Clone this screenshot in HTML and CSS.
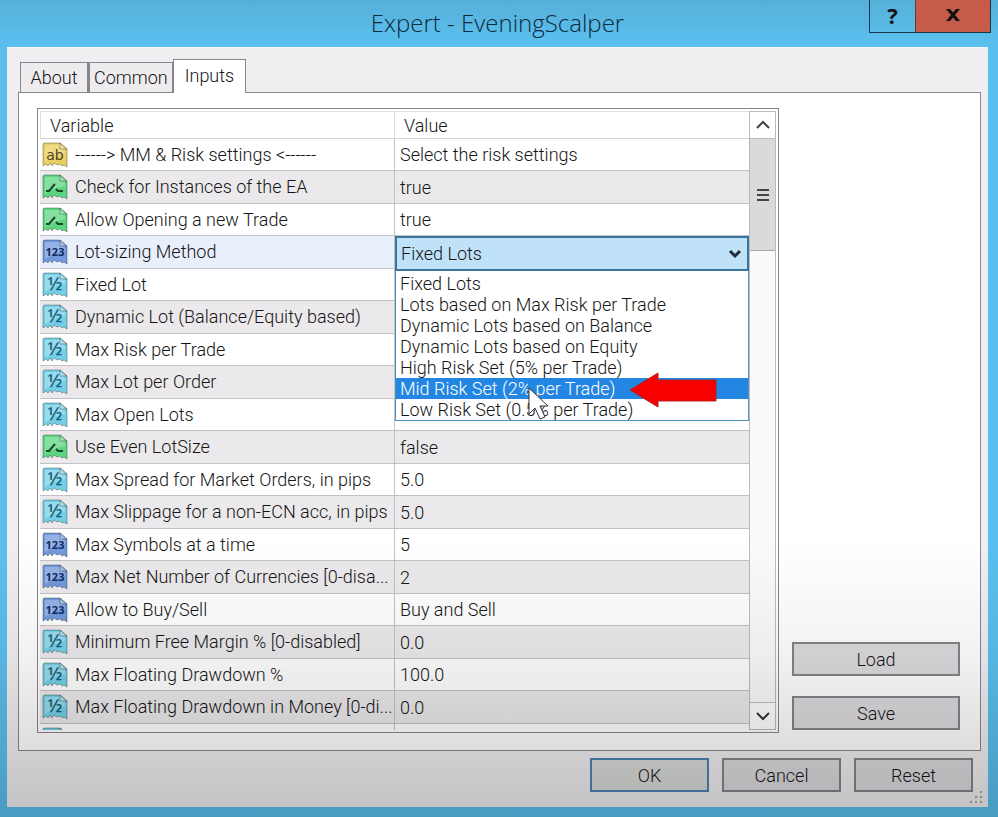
FILE: index.html
```html
<!DOCTYPE html>
<html lang="en">
<head>
    <meta charset="UTF-8">
    <meta name="viewport" content="width=device-width, initial-scale=1.0">
    <title>Expert - EveningScalper</title>
    <link rel="stylesheet" href="styles.css">
</head>
<body>
    <!-- Shapes shared by the type icons -->
    <svg class="sprite" aria-hidden="true">
        <symbol id="sheet" viewBox="0 0 26 26">
            <path d="M1 2 L2 1 H18 L25 7 V25 L22 23 L20 24 L18 22 L15 23 L12 21 L10 24 L8 21 L6 24 L4 22 L1 24 Z" fill="currentColor" stroke="#000" stroke-opacity=".3"/>
            <path d="M3 3 H17 L23 9 V12 Q12 14 3 20 Z" fill="#fff" fill-opacity=".25"/>
            <path d="M18 1 V7 H25 Z" fill="#fff" fill-opacity=".35" stroke="#000" stroke-opacity=".3"/>
        </symbol>
        <symbol id="sheet-bool" viewBox="0 0 26 26">
            <use href="#sheet"/>
            <path d="M4 17 H7 L13 10 M14 15 L16 17 H21" fill="none" stroke="#17482a" stroke-width="2"/>
        </symbol>
    </svg>

    <div class="window">
        <header class="titlebar">
            <h1>Expert - EveningScalper</h1>
            <div class="window-buttons">
                <button class="help" type="button">?</button>
                <button class="close" type="button" aria-label="Close">
                    <svg width="16" height="14" viewBox="0 0 16 14"><path d="M1 1 H5 L8 4.500 L11 1 H15 L10 7 L15 13 H11 L8 9.500 L5 13 H1 L6 7 Z" fill="#111"/></svg>
                </button>
            </div>
        </header>

        <main class="dialog">
            <nav class="tabs">
                <button type="button" class="tab">About</button>
                <button type="button" class="tab">Common</button>
                <button type="button" class="tab active">Inputs</button>
            </nav>

            <section class="panel">
                <div class="list">
                    <div class="table-wrap">
                        <table>
                            <thead>
                                <tr><th class="name-col">Variable</th><th>Value</th></tr>
                            </thead>
                            <tbody>
                                <tr><td><span class="icon yellow"><svg><use href="#sheet"/></svg><b>ab</b></span>------&gt; MM &amp; Risk settings &lt;------</td><td>Select the risk settings</td></tr>
                                <tr><td><span class="icon green"><svg><use href="#sheet-bool"/></svg></span>Check for Instances of the EA</td><td>true</td></tr>
                                <tr><td><span class="icon green"><svg><use href="#sheet-bool"/></svg></span>Allow Opening a new Trade</td><td>true</td></tr>
                                <tr class="selected">
                                    <td><span class="icon blue"><svg><use href="#sheet"/></svg><b>123</b></span><label for="lot-method">Lot-sizing Method</label></td>
                                    <td class="editor">
                                        <div class="combo">
                                            <select id="lot-method">
                                                <option>Fixed Lots</option>
                                            </select>
                                            <svg class="combo-arrow" width="14" height="10" viewBox="0 0 14 10"><path d="M2 2 L7 7 L12 2" fill="none" stroke="#222c36" stroke-width="3"/></svg>
                                            <ul class="options">
                                                <li>Fixed Lots</li>
                                                <li>Lots based on Max Risk per Trade</li>
                                                <li>Dynamic Lots based on Balance</li>
                                                <li>Dynamic Lots based on Equity</li>
                                                <li>High Risk Set (5% per Trade)</li>
                                                <li class="current">Mid Risk Set (2% per Trade)</li>
                                                <li>Low Risk Set (0.5% per Trade)</li>
                                            </ul>
                                            <svg class="red-arrow" width="90" height="38" viewBox="0 0 90 38"><path d="M1 18 L29 1 V8 H87 V29 H29 V35 Z" fill="#f90000" stroke="#b3201c"/></svg>
                                            <svg class="cursor" width="22" height="34" viewBox="0 0 22 34"><path d="M1 1 V27 L7 21 L12 32 L17 30 L12 19 H20 Z" fill="#fff" stroke="#333"/></svg>
                                        </div>
                                    </td>
                                </tr>
                                <tr><td><span class="icon cyan"><svg><use href="#sheet"/></svg><b>½</b></span>Fixed Lot</td><td></td></tr>
                                <tr><td><span class="icon cyan"><svg><use href="#sheet"/></svg><b>½</b></span>Dynamic Lot (Balance/Equity based)</td><td></td></tr>
                                <tr><td><span class="icon cyan"><svg><use href="#sheet"/></svg><b>½</b></span>Max Risk per Trade</td><td></td></tr>
                                <tr><td><span class="icon cyan"><svg><use href="#sheet"/></svg><b>½</b></span>Max Lot per Order</td><td></td></tr>
                                <tr><td><span class="icon cyan"><svg><use href="#sheet"/></svg><b>½</b></span>Max Open Lots</td><td></td></tr>
                                <tr><td><span class="icon green"><svg><use href="#sheet-bool"/></svg></span>Use Even LotSize</td><td>false</td></tr>
                                <tr><td><span class="icon cyan"><svg><use href="#sheet"/></svg><b>½</b></span>Max Spread for Market Orders, in pips</td><td>5.0</td></tr>
                                <tr><td><span class="icon cyan"><svg><use href="#sheet"/></svg><b>½</b></span>Max Slippage for a non-ECN acc, in pips</td><td>5.0</td></tr>
                                <tr><td><span class="icon blue"><svg><use href="#sheet"/></svg><b>123</b></span>Max Symbols at a time</td><td>5</td></tr>
                                <tr><td><span class="icon blue"><svg><use href="#sheet"/></svg><b>123</b></span>Max Net Number of Currencies [0-disa...</td><td>2</td></tr>
                                <tr><td><span class="icon blue"><svg><use href="#sheet"/></svg><b>123</b></span>Allow to Buy/Sell</td><td>Buy and Sell</td></tr>
                                <tr><td><span class="icon cyan"><svg><use href="#sheet"/></svg><b>½</b></span>Minimum Free Margin % [0-disabled]</td><td>0.0</td></tr>
                                <tr><td><span class="icon cyan"><svg><use href="#sheet"/></svg><b>½</b></span>Max Floating Drawdown %</td><td>100.0</td></tr>
                                <tr><td><span class="icon cyan"><svg><use href="#sheet"/></svg><b>½</b></span>Max Floating Drawdown in Money [0-di...</td><td>0.0</td></tr>
                                <tr><td><span class="icon cyan"><svg><use href="#sheet"/></svg></span></td><td></td></tr>
                            </tbody>
                        </table>
                    </div>
                    <div class="scrollbar">
                        <button type="button" class="scroll-btn" aria-label="Scroll up">
                            <svg width="14" height="10" viewBox="0 0 14 10"><path d="M1 8 L7 2 L13 8" fill="none" stroke="#444" stroke-width="2"/></svg>
                        </button>
                        <div class="thumb">
                            <svg width="12" height="14" viewBox="0 0 12 14"><path d="M0 2 H12 M0 7 H12 M0 12 H12" stroke="#444" stroke-width="2"/></svg>
                        </div>
                        <button type="button" class="scroll-btn down" aria-label="Scroll down">
                            <svg width="14" height="10" viewBox="0 0 14 10"><path d="M1 2 L7 8 L13 2" fill="none" stroke="#333" stroke-width="2"/></svg>
                        </button>
                    </div>
                </div>

                <div class="side-buttons">
                    <button type="button" class="btn">Load</button>
                    <button type="button" class="btn">Save</button>
                </div>
            </section>

            <footer class="actions">
                <button type="button" class="btn default">OK</button>
                <button type="button" class="btn">Cancel</button>
                <button type="button" class="btn">Reset</button>
            </footer>
            <svg class="grip" width="14" height="14" viewBox="0 0 14 14"><path d="M10 0h2v2h-2z M10 5h2v2h-2z M5 5h2v2h-2z M10 10h2v2h-2z M5 10h2v2h-2z M0 10h2v2h-2z" fill="#a5a2a8"/></svg>
        </main>
    </div>
</body>
</html>
```

FILE: styles.css
```css
* {
    margin: 0;
    padding: 0;
    box-sizing: border-box;
}

body {
    font-family: Roboto, "Liberation Sans", sans-serif;
    font-size: 18px;
    font-weight: 300;
    line-height: 21px;
    color: #151515;
}

button, select {
    font: inherit;
    color: inherit;
    border-radius: 0;
}

.sprite {
    position: absolute;
    width: 0;
    height: 0;
}

/* Window frame */
.window {
    position: relative;
    min-height: 100vh;
    padding: 0 10px 10px 7px;
    display: flex;
    flex-direction: column;
    background: linear-gradient(#56afd8, #5bbfed 40px);
}

/* Shade that falls over the lower part of the window */
.window::after {
    content: "";
    position: absolute;
    inset: 0;
    background: linear-gradient(transparent 66%, rgba(0, 0, 0, 0.05) 80%, rgba(0, 0, 0, 0.19));
    pointer-events: none;
}

.titlebar {
    position: relative;
    height: 47px;
    padding-bottom: 2px;
    display: flex;
    align-items: center;
    justify-content: center;
}

.titlebar h1 {
    font-family: "Open Sans", "Noto Sans", sans-serif;
    font-size: 24px;
    font-weight: 300;
    line-height: 30px;
    color: #0c2a3c;
}

.window-buttons {
    position: absolute;
    top: 0;
    right: -3px;
    display: flex;
    height: 33px;
    border: 1px solid #16384c;
    border-top: 0;
}

.window-buttons button {
    padding-bottom: 2px;
    border: 0;
    display: flex;
    align-items: center;
    justify-content: center;
}

.help {
    width: 45px;
    font-family: "Open Sans", sans-serif;
    font-size: 22px;
    font-weight: 700;
    color: #111;
    background: transparent;
}

.window-buttons .close {
    width: 75px;
    background: #c75b49;
    border-left: 1px solid #5c3b3b;
}

/* Dialog */
.dialog {
    position: relative;
    flex: 1;
    padding: 11px 6px 15px 11px;
    display: flex;
    flex-direction: column;
    background: #f0eef0;
    border-top: 1px solid #f8f6fa;
    border-right: 1px solid #d8f2fc;
}

.tabs {
    display: flex;
    align-items: flex-end;
    padding-left: 2px;
    height: 33px;
}

.tab {
    min-width: 68px;
    height: 30px;
    padding: 0 4px;
    background: #eeecef;
    border: 1px solid #88868c;
    border-bottom: 0;
}

.tab + .tab {
    border-left-width: 2px;
}

.tab.active {
    position: relative;
    z-index: 1;
    height: 34px;
    margin-bottom: -1px;
    padding: 0 11px 2px;
    background: #fff;
    border-left-width: 1px;
}

.panel {
    flex: 1;
    display: flex;
    gap: 13px;
    padding: 15px 20px 17px 18px;
    background: #fff;
    border: 1px solid #88868c;
}

.list {
    flex: 1;
    height: 625px;
    display: flex;
    padding: 2px;
    border: 1px solid #88868c;
}

.table-wrap {
    flex: 1;
    overflow: hidden;
}

table {
    width: 100%;
    table-layout: fixed;
    border-collapse: separate;
    border-spacing: 0;
}

th {
    height: 28px;
    padding-left: 9px;
    text-align: left;
    font-weight: 300;
    border-top: 1px solid #dedede;
    border-bottom: 1px solid #d5d3d5;
    border-left: 1px solid #dedede;
}

.name-col {
    width: 354px;
}

tbody tr {
    height: 32px;
}

tbody tr:nth-child(even) {
    height: 33px;
    background: #ebe9eb;
}

tbody tr.selected {
    background: #e9f0fc;
}

td {
    padding: 0 0 0 2px;
    border-bottom: 1px solid #c3c1c4;
    white-space: nowrap;
}

td + td {
    padding-left: 5px;
    border-left: 1px solid #c3c1c4;
}

/* Type icon: a torn sheet with its sign on top */
.icon {
    position: relative;
    display: inline-block;
    width: 26px;
    height: 26px;
    margin-right: 7px;
    vertical-align: -7px;
}

.icon svg {
    display: block;
    width: 26px;
    height: 26px;
}

.icon b {
    position: absolute;
    inset: 0;
    text-align: center;
    font-family: "Open Sans", sans-serif;
    font-size: 11px;
    font-weight: 700;
    line-height: 26px;
}

.yellow { color: #e7cf62; }
.green { color: #5cd581; }
.blue { color: #7199dc; }
.cyan { color: #74cfe6; }

.yellow b {
    font-family: "DejaVu Sans", sans-serif;
    font-size: 14px;
    font-weight: 400;
    color: #51431a;
}

.blue b {
    color: #102d62;
}

.cyan b {
    font-size: 18px;
    font-weight: 600;
    line-height: 22px;
    color: #17607b;
}

/* Open drop-down over the value cell */
.editor {
    position: relative;
}

.combo {
    position: absolute;
    top: 0;
    left: 0;
    right: 0;
    z-index: 2;
}

.combo select {
    display: block;
    width: 100%;
    height: 35px;
    padding-left: 4px;
    appearance: none;
    background: #bfe2f9;
    border: 2px solid #37759c;
}

.combo-arrow {
    position: absolute;
    top: 13px;
    right: 7px;
}

.options {
    list-style: none;
    padding: 2px 0 0;
    background: #fff;
    border: 1px solid #4a91bd;
    border-top: 0;
}

.options li {
    height: 21px;
    padding-left: 4px;
}

.options .current {
    color: #fff;
    background: #2386e2;
}

.red-arrow {
    position: absolute;
    top: 136px;
    left: 234px;
}

.cursor {
    position: absolute;
    top: 151px;
    left: 133px;
}

/* Scrollbar */
.scrollbar {
    width: 27px;
    display: flex;
    flex-direction: column;
    background: #fbfafb;
    border: 1px solid #bcbabd;
}

.scroll-btn {
    height: 27px;
    display: flex;
    align-items: center;
    justify-content: center;
    background: #fff;
    border: 0;
    border-bottom: 1px solid #bcbabd;
}

.scroll-btn.down {
    margin-top: auto;
    border-top: 1px solid #bcbabd;
    border-bottom: 0;
}

.thumb {
    height: 112px;
    display: flex;
    align-items: center;
    justify-content: center;
    background: #dbd9db;
    border-bottom: 1px solid #aaa8ab;
}

/* Buttons */
.side-buttons {
    width: 168px;
    display: flex;
    flex-direction: column;
    justify-content: flex-end;
    gap: 20px;
    padding-bottom: 3px;
}

.btn {
    height: 34px;
    background: #dcdadd;
    border: 2px solid #858388;
}

.actions {
    display: flex;
    justify-content: flex-end;
    gap: 13px;
    padding: 7px 8px 0 0;
}

.actions .btn {
    width: 119px;
}

.actions .default {
    background: #d9dbd8;
    border-color: #4e82b4;
}

.grip {
    position: absolute;
    right: 3px;
    bottom: 2px;
}
```
